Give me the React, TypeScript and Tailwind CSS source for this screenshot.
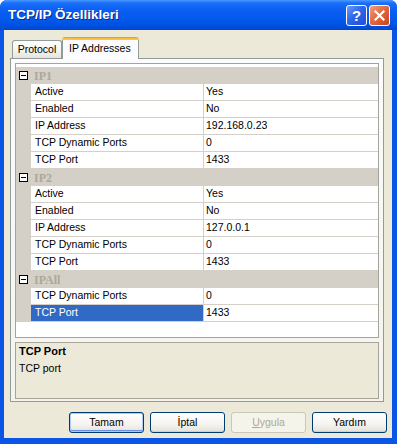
import React from 'react';

const F = "font-['Liberation_Sans',Arial,sans-serif]";

type Row = { k: string; v: string; sel?: boolean };
const sections: { name: string; rows: Row[] }[] = [
  {
    name: 'IP1',
    rows: [
      { k: 'Active', v: 'Yes' },
      { k: 'Enabled', v: 'No' },
      { k: 'IP Address', v: '192.168.0.23' },
      { k: 'TCP Dynamic Ports', v: '0' },
      { k: 'TCP Port', v: '1433' },
    ],
  },
  {
    name: 'IP2',
    rows: [
      { k: 'Active', v: 'Yes' },
      { k: 'Enabled', v: 'No' },
      { k: 'IP Address', v: '127.0.0.1' },
      { k: 'TCP Dynamic Ports', v: '0' },
      { k: 'TCP Port', v: '1433' },
    ],
  },
  {
    name: 'IPAll',
    rows: [
      { k: 'TCP Dynamic Ports', v: '0' },
      { k: 'TCP Port', v: '1433', sel: true },
    ],
  },
];

function Expander() {
  return (
    <div className="w-[9px] h-[9px] border border-black bg-white flex items-center justify-center">
      <div className="w-[5px] h-[1px] bg-black" />
    </div>
  );
}

function Btn({ label, disabled, def }: { label: React.ReactNode; disabled?: boolean; def?: boolean }) {
  if (disabled) {
    return (
      <div className="w-[75px] h-[21px] rounded-[3px] border border-[#c9c7ba] bg-[#f5f4ea] flex items-center justify-center text-[10.5px] text-[#aca899]">
        {label}
      </div>
    );
  }
  return (
    <div
      className={`w-[75px] h-[21px] rounded-[3px] border border-[#003c74] bg-[linear-gradient(180deg,#ffffff_0%,#f5f4f0_60%,#e3e0d6_100%)] flex items-center justify-center text-[10.5px] text-black ${
        def ? 'shadow-[inset_0_0_0_1px_#aecbf7,inset_0_-1px_0_1px_#6a8ee8]' : 'shadow-[inset_0_-1px_0_#d6d0c5]'
      }`}
    >
      {label}
    </div>
  );
}

export default function App() {
  return (
    <div className="w-[397px] h-[444px] bg-white">
      <div className={`${F} w-[397px] h-[444px] flex flex-col rounded-t-[7px] overflow-hidden bg-[#0b55e6]`}>
        {/* Title bar */}
        <div className="h-[30px] shrink-0 flex items-center pl-[8px] pr-[7px] bg-[linear-gradient(180deg,#4a9bff_0%,#1a6ef8_10%,#0a5ef2_35%,#0058ea_70%,#004edc_90%,#0045cc_100%)]">
          <span className="text-white font-bold text-[13.5px] leading-none [text-shadow:1px_1px_0_#0c2a8a]">
            TCP/IP Özellikleri
          </span>
          <div className="ml-auto flex gap-[2px]">
            <div className="w-[21px] h-[21px] rounded-[3px] border border-white bg-[linear-gradient(135deg,#6d9cf7_0%,#2f67ea_45%,#1c4fd8_100%)] flex items-center justify-center">
              <span className="text-white font-bold text-[15px] leading-none">?</span>
            </div>
            <div className="w-[21px] h-[21px] rounded-[3px] border border-white bg-[linear-gradient(135deg,#f0a181_0%,#e06a42_45%,#c9431d_100%)] flex items-center justify-center">
              <svg width="11" height="11" viewBox="0 0 11 11">
                <path d="M1.5 1.5 L9.5 9.5 M9.5 1.5 L1.5 9.5" stroke="white" strokeWidth="2.2" strokeLinecap="square" />
              </svg>
            </div>
          </div>
        </div>

        {/* Body */}
        <div className="flex-1 ml-[4px] mr-[5px] mb-[6px] bg-[#ece9d8] flex flex-col">
          {/* Tabs */}
          <div className="h-[28px] shrink-0 flex items-end pl-[8px] relative z-10">
            <div className="w-[50px] h-[18px] border border-b-0 border-[#919b9c] rounded-t-[3px] bg-[linear-gradient(180deg,#ffffff_0%,#f3f2ec_60%,#e6e4da_100%)] flex items-center justify-center text-[10.5px] text-black">
              Protocol
            </div>
            <div className="w-[77px] h-[22px] translate-y-[1px] flex flex-col">
              <div className="h-[3px] rounded-t-[3px] bg-[linear-gradient(180deg,#e68b2c_0%,#ffc73c_60%,#ffc73c_100%)]" />
              <div className="flex-1 border-x border-[#919b9c] bg-[#fcfcfe] flex items-center pl-[6px] text-[10.5px] text-black pb-[1px]">
                IP Addresses
              </div>
            </div>
          </div>

          {/* Panel */}
          <div className="ml-[6px] mr-[8px] h-[344px] shrink-0 border border-[#919b9c] bg-[linear-gradient(180deg,#fcfcfe_0%,#f4f3ee_100%)] p-[4px] pb-[2px] flex flex-col gap-[4px]">
            {/* Grid */}
            <div className="h-[275px] shrink-0 border border-[#a5a49a] bg-white pt-[3px] text-[10.5px] text-black">
              {sections.map((s) => (
                <div key={s.name}>
                  <div className="h-[17px] bg-[#d4d0c8] flex items-center">
                    <div className="w-[15px] flex justify-center">
                      <Expander />
                    </div>
                    <span className="pl-[3px] font-bold text-[#aca899] font-['Liberation_Serif',serif] text-[12px]">
                      {s.name}
                    </span>
                  </div>
                  {s.rows.map((r, i) => (
                    <div key={i} className="h-[17px] flex">
                      <div className="w-[15px] bg-[#d4d0c8]" />
                      <div
                        className={`w-[173px] border-r border-b border-[#d4d0c8] flex items-center pl-[4px] ${
                          r.sel ? 'bg-[#316ac5] text-white' : ''
                        }`}
                      >
                        {r.k}
                      </div>
                      <div className="flex-1 border-b border-[#d4d0c8] flex items-center pl-[2px]">{r.v}</div>
                    </div>
                  ))}
                </div>
              ))}
            </div>
            {/* Description */}
            <div className="h-[57px] shrink-0 border border-[#a5a49a] bg-[#ece9d8] px-[3px] pt-[0px] text-[10.5px] text-black leading-[17px]">
              <div className="font-bold text-[11px]">TCP Port</div>
              <div>TCP port</div>
            </div>
          </div>

          {/* Buttons */}
          <div className="mt-[10px] flex justify-end gap-[6px] pr-[5px]">
            <Btn label="Tamam" def />
            <Btn label="İptal" />
            <Btn
              label={
                <span>
                  <span className="underline">U</span>ygula
                </span>
              }
              disabled
            />
            <Btn label="Yardım" />
          </div>
        </div>
      </div>
    </div>
  );
}
